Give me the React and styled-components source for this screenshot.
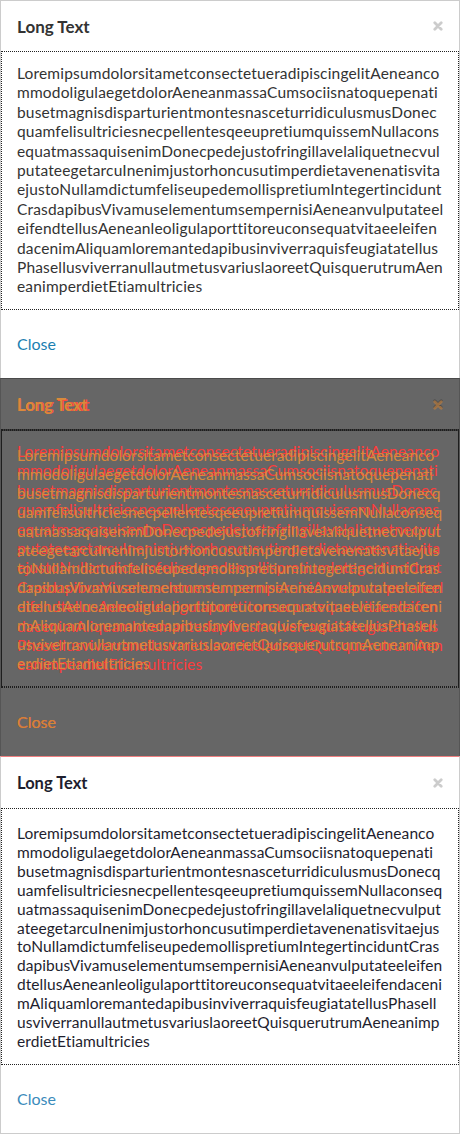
import React from 'react';
import styled, {createGlobalStyle} from 'styled-components';

const GlobalStyle = createGlobalStyle`
    * {
        box-sizing: border-box;
    }

    body {
        margin: 0;
        background: #fff;
        font-family: Lato, "Open Sans", sans-serif;
    }
`;

const expectedLines = [
    'LoremipsumdolorsitametconsectetueradipiscingelitAeneanco',
    'mmodoligulaegetdolorAeneanmassaCumsociisnatoquepenati',
    'busetmagnisdisparturientmontesnasceturridiculusmusDonec',
    'quamfelisultriciesnecpellentesqeeupretiumquissemNullacons',
    'equatmassaquisenimDonecpedejustofringillavelaliquetnecvul',
    'putateegetarcuInenimjustorhoncusutimperdietavenenatisvita',
    'ejustoNullamdictumfeliseupedemollispretiumIntegertincidunt',
    'CrasdapibusVivamuselementumsempernisiAeneanvulputateel',
    'eifendtellusAeneanleoligulaporttitoreuconsequatvitaeeleifen',
    'dacenimAliquamloremantedapibusinviverraquisfeugiatatellus',
    'PhasellusviverranullautmetusvariuslaoreetQuisquerutrumAen',
    'eanimperdietEtiamultricies',
];

const actualLines = [
    'LoremipsumdolorsitametconsectetueradipiscingelitAeneanco',
    'mmodoligulaegetdolorAeneanmassaCumsociisnatoquepenati',
    'busetmagnisdisparturientmontesnasceturridiculusmusDonecq',
    'uamfelisultriciesnecpellentesqeeupretiumquissemNullaconseq',
    'uatmassaquisenimDonecpedejustofringillavelaliquetnecvulput',
    'ateegetarcuInenimjustorhoncusutimperdietavenenatisvitaejus',
    'toNullamdictumfeliseupedemollispretiumIntegertinciduntCras',
    'dapibusVivamuselementumsempernisiAeneanvulputateeleifen',
    'dtellusAeneanleoligulaporttitoreuconsequatvitaeeleifendaceni',
    'mAliquamloremantedapibusinviverraquisfeugiatatellusPhasell',
    'usviverranullautmetusvariuslaoreetQuisquerutrumAeneanimp',
    'erdietEtiamultricies',
];

const expected = {
    text: '#333333', title: '#333333', link: '#1b7fb1', icon: '#cccccc', dots: '#222222', rule: 'transparent',
    headH: 52, lh: 19.4, pt: 12, pb: 12, ls: 0.17, titleSize: 17, lines: expectedLines,
};

const actual = {
    text: '#1e1e2e', title: '#1e1e2e', link: '#3b8bbb', icon: '#cccccc', dots: '#222222', rule: 'transparent',
    headH: 53, lh: 18.9, pt: 15, pb: 13, ls: 0.08, titleSize: 16.5, lines: actualLines,
};

const diffRed = {
    ...expected, text: '#ff3b3b', title: '#ff4a3a', link: '#ff4a3a', icon: 'rgba(60,60,60,0.6)', dots: '#1e1e1e', rule: '#3c3c3c',
};

const diffOrange = {
    ...actual, text: '#d98a3c', title: '#d98a3c', link: '#d08838', icon: 'rgba(217,138,60,0.55)', dots: '#1e1e1e', rule: '#3c3c3c',
};

function CloseIcon({color}) {
    return (
        <svg width="10" height="10" viewBox="0 0 10 10">
            <path d="M1.8 1.8 L8.2 8.2 M8.2 1.8 L1.8 8.2" stroke={color} strokeWidth="2.8" strokeLinecap="round"/>
        </svg>
    );
}

function DialogContent({tone}) {
    return (
        <Content>
            <Header $h={tone.headH} $rule={tone.rule}>
                <Title $color={tone.title} $size={tone.titleSize}>Long Text</Title>
                <CloseIcon color={tone.icon}/>
            </Header>
            <Body $dots={tone.dots} $pt={tone.pt} $pb={tone.pb}>
                {tone.lines.map((line, i) => (
                    <Line key={i} $color={tone.text} $lh={tone.lh} $ls={tone.ls}>{line}</Line>
                ))}
            </Body>
            <Footer>
                <CloseLink $color={tone.link}>Close</CloseLink>
            </Footer>
        </Content>
    );
}

function App() {
    return (
        <>
            <GlobalStyle/>
            <Page>
                <Panel $edge="top">
                    <DialogContent tone={expected}/>
                </Panel>
                <DiffPanel>
                    <DiffLayer>
                        <DialogContent tone={diffRed}/>
                    </DiffLayer>
                    <DiffLayer>
                        <DialogContent tone={diffOrange}/>
                    </DiffLayer>
                </DiffPanel>
                <Panel $edge="bottom">
                    <DialogContent tone={actual}/>
                </Panel>
            </Page>
        </>
    );
}

const Page = styled.div`
    width: 460px;
    display: flex;
    flex-direction: column;
`;

const Panel = styled.div`
    height: 378px;
    background: #fff;
    border-left: 1px solid #cccccc;
    border-right: 1px solid #cccccc;
    border-top: 1px solid ${p => p.$edge === 'top' ? '#cccccc' : '#f08080'};
    border-bottom: ${p => p.$edge === 'bottom' ? '1px solid #cccccc' : 'none'};
    display: flex;
    flex-direction: column;
`;

const DiffPanel = styled.div`
    height: 378px;
    background: #666666;
    border-left: 1px solid #555555;
    border-right: 1px solid #555555;
    border-top: 1px solid #4a4a4a;
    display: grid;
    grid-template: 1fr / 1fr;
`;

const DiffLayer = styled.div`
    grid-area: 1 / 1;
    display: flex;
    flex-direction: column;
`;

const Content = styled.div`
    flex: 1;
    display: flex;
    flex-direction: column;
`;

const Header = styled.div`
    height: ${p => p.$h - 1}px;
    padding: 0 16px;
    display: flex;
    align-items: center;
    justify-content: space-between;
    border-bottom: 1px solid ${p => p.$rule};
    margin-bottom: -1px;
`;

const Title = styled.h4`
    margin: 0;
    font-size: ${p => p.$size}px;
    font-weight: 700;
    color: ${p => p.$color};
`;

const Body = styled.div`
    border: 1px dotted ${p => p.$dots};
    padding: ${p => p.$pt}px 15px ${p => p.$pb}px;
`;

const Line = styled.div`
    font-size: 15.5px;
    white-space: nowrap;
    line-height: ${p => p.$lh}px;
    letter-spacing: ${p => p.$ls}px;
    color: ${p => p.$color};
`;

const Footer = styled.div`
    flex: 1;
    display: flex;
    align-items: center;
    padding: 0 16px;
`;

const CloseLink = styled.a`
    font-size: 16px;
    color: ${p => p.$color};
    cursor: pointer;
    text-decoration: none;
`;

export default App;
